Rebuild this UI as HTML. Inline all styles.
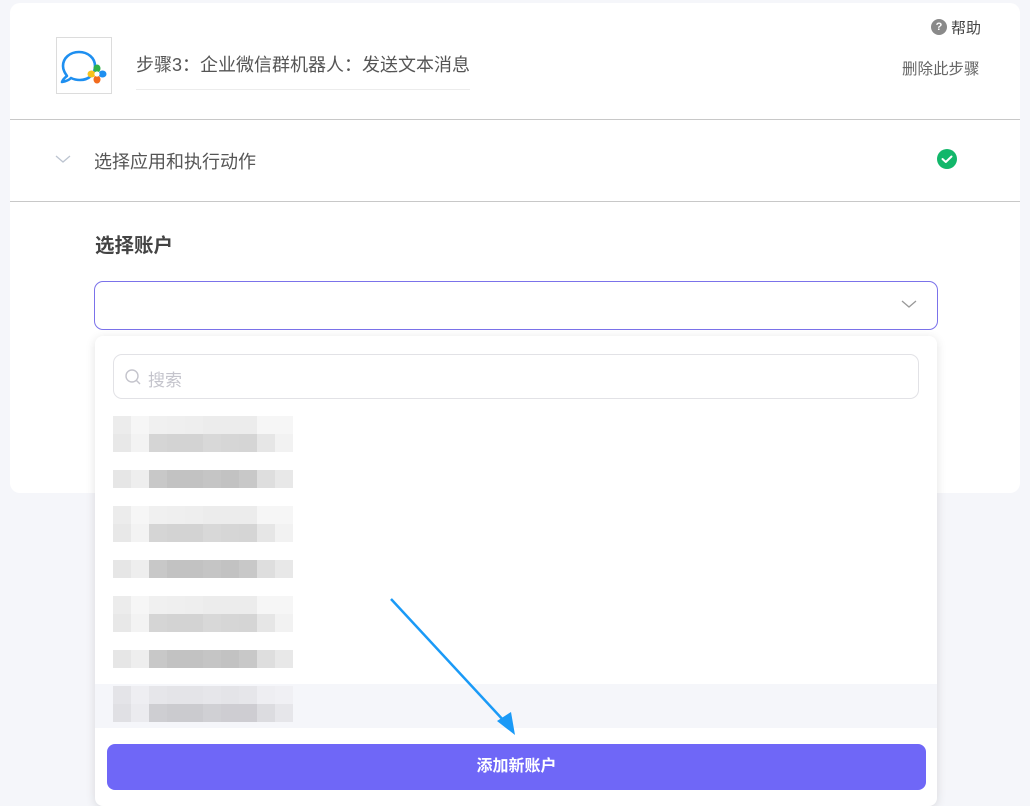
<!DOCTYPE html>
<html><head><meta charset="utf-8">
<style>
*{margin:0;padding:0;box-sizing:border-box}
body{width:1030px;height:799px;background:#f5f6fa;position:relative;overflow:hidden;font-family:"Liberation Sans","Noto Sans CJK SC",sans-serif;color:#555}
.abs{position:absolute}
.card{left:10px;top:3px;width:1010px;height:490px;background:#fff;border-radius:10px}
.row{position:absolute;left:113px;height:18px;display:flex}
.row span{width:18px;height:18px;display:block}
</style></head><body>
<div class="abs card"></div>
<div class="abs" style="left:56px;top:37px;width:56px;height:57px;border:1px solid #dcdcdc;background:#fff">
<svg width="56" height="57" viewBox="0 0 56 57">
<path d="M10 38 Q6 41 5 44 Q11 43 14 40 Q18 42 23 42 C32 42 38 36 38 28 C38 20 31 14 22 14 C13 14 6 20 6 28 C6 32 8 35 10 38 Z" fill="none" stroke="#1e8ff0" stroke-width="2.6" stroke-linejoin="round"/>
<ellipse cx="40" cy="30.5" rx="3.5" ry="4" fill="#2db24a"/>
<ellipse cx="45.5" cy="36" rx="4" ry="3.5" fill="#1e8ff0"/>
<ellipse cx="40" cy="41.5" rx="3.5" ry="4" fill="#f26b1d"/>
<ellipse cx="34.5" cy="36" rx="4" ry="3.5" fill="#f7c31c"/>
<circle cx="40" cy="36" r="2.6" fill="#fff"/>
</svg></div>
<div class="abs" style="left:136px;top:51px;font-size:18px;color:#555;white-space:nowrap">步骤3：企业微信群机器人：发送文本消息</div>
<div class="abs" style="left:136px;top:89px;width:334px;height:1px;background:#ececec"></div>
<div class="abs" style="left:931px;top:19px;width:16px;height:16px;border-radius:50%;background:#8a8a8a;color:#fff;font-size:11px;font-weight:bold;text-align:center;line-height:16px">?</div>
<div class="abs" style="left:951px;top:17px;font-size:15px;color:#444">帮助</div>
<div class="abs" style="left:902px;top:57px;font-size:15.5px;color:#666;white-space:nowrap">删除此步骤</div>
<div class="abs" style="left:10px;top:119px;width:1010px;height:1px;background:#c8c8c8"></div>
<svg class="abs" style="left:54px;top:153px" width="18" height="12"><path d="M2 3 L9 9 L16 3" fill="none" stroke="#bcc4d0" stroke-width="1.3"/></svg>
<div class="abs" style="left:94px;top:148px;font-size:18px;color:#555;white-space:nowrap">选择应用和执行动作</div>
<svg class="abs" style="left:937px;top:149px" width="20" height="20"><circle cx="10" cy="10" r="10" fill="#12b76a"/><path d="M5.5 10 L8.8 13 L14.5 7.5" fill="none" stroke="#fff" stroke-width="2" stroke-linecap="round" stroke-linejoin="round"/></svg>
<div class="abs" style="left:10px;top:201px;width:1010px;height:1px;background:#c8c8c8"></div>
<div class="abs" style="left:95px;top:229px;font-size:19.5px;font-weight:bold;color:#444;white-space:nowrap">选择账户</div>
<div class="abs" style="left:94px;top:281px;width:844px;height:49px;border:1px solid #7b72ea;border-radius:9px;background:#fff"></div>
<svg class="abs" style="left:900px;top:299px" width="18" height="12"><path d="M2 2 L9 8 L16 2" fill="none" stroke="#999" stroke-width="1.3"/></svg>
<div class="abs" style="left:95px;top:336px;width:842px;height:470px;background:#fff;border-radius:8px;box-shadow:0 2px 10px rgba(0,0,0,0.12)"></div>
<div class="abs" style="left:113px;top:354px;width:806px;height:45px;border:1px solid #e2e2e6;border-radius:9px"></div>
<svg class="abs" style="left:124px;top:368px" width="18" height="18"><circle cx="8" cy="8" r="6" fill="none" stroke="#c4c4cc" stroke-width="1.4"/><path d="M12.5 12.5 L16 16" stroke="#c4c4cc" stroke-width="1.4"/></svg>
<div class="abs" style="left:148px;top:366px;font-size:17px;color:#c4c4cc">搜索</div>
<div class="abs" style="left:95px;top:684px;width:842px;height:44px;background:#f5f6fa"></div>
<div class="abs" style="left:107px;top:744px;width:819px;height:46px;background:#6f67f7;border-radius:8px;color:#fff;font-size:16px;font-weight:bold;text-align:center;line-height:46px">添加新账户</div>
<svg class="abs" style="left:0;top:0" width="1030" height="799">
<path d="M391 599 L505 722" stroke="#1a9af7" stroke-width="2.5"/>
<path d="M515 735 L497 721 L511 712 Z" fill="#1a9af7"/>
</svg>
<div class="row" style="top:416px"><span style="background:#ececec"></span><span style="background:#f6f6f6"></span><span style="background:#f0f0f0"></span><span style="background:#efefef"></span><span style="background:#eee"></span><span style="background:#ececec"></span><span style="background:#ececec"></span><span style="background:#ececec"></span><span style="background:#f6f6f6"></span><span style="background:#f6f6f6"></span></div>
<div class="row" style="top:434px"><span style="background:#e8e8e8"></span><span style="background:#f3f3f3"></span><span style="background:#d5d5d5"></span><span style="background:#d3d3d3"></span><span style="background:#d3d3d3"></span><span style="background:#d8d8d8"></span><span style="background:#d6d6d6"></span><span style="background:#d5d5d5"></span><span style="background:#e6e6e6"></span><span style="background:#f2f2f2"></span></div>
<div class="row" style="top:470px"><span style="background:#e6e6e6"></span><span style="background:#eee"></span><span style="background:#c8c8c8"></span><span style="background:#c2c2c2"></span><span style="background:#c2c2c2"></span><span style="background:#c5c5c5"></span><span style="background:#c2c2c2"></span><span style="background:#c8c8c8"></span><span style="background:#dedede"></span><span style="background:#e8e8e8"></span></div>
<div class="row" style="top:506px"><span style="background:#ececec"></span><span style="background:#f6f6f6"></span><span style="background:#f0f0f0"></span><span style="background:#efefef"></span><span style="background:#eee"></span><span style="background:#ececec"></span><span style="background:#ececec"></span><span style="background:#ececec"></span><span style="background:#f6f6f6"></span><span style="background:#f6f6f6"></span></div>
<div class="row" style="top:524px"><span style="background:#e8e8e8"></span><span style="background:#f3f3f3"></span><span style="background:#d5d5d5"></span><span style="background:#d3d3d3"></span><span style="background:#d3d3d3"></span><span style="background:#d8d8d8"></span><span style="background:#d6d6d6"></span><span style="background:#d5d5d5"></span><span style="background:#e6e6e6"></span><span style="background:#f2f2f2"></span></div>
<div class="row" style="top:560px"><span style="background:#e6e6e6"></span><span style="background:#eee"></span><span style="background:#c8c8c8"></span><span style="background:#c2c2c2"></span><span style="background:#c2c2c2"></span><span style="background:#c5c5c5"></span><span style="background:#c2c2c2"></span><span style="background:#c8c8c8"></span><span style="background:#dedede"></span><span style="background:#e8e8e8"></span></div>
<div class="row" style="top:596px"><span style="background:#ececec"></span><span style="background:#f6f6f6"></span><span style="background:#f0f0f0"></span><span style="background:#efefef"></span><span style="background:#eee"></span><span style="background:#ececec"></span><span style="background:#ececec"></span><span style="background:#ececec"></span><span style="background:#f6f6f6"></span><span style="background:#f6f6f6"></span></div>
<div class="row" style="top:614px"><span style="background:#e8e8e8"></span><span style="background:#f3f3f3"></span><span style="background:#d5d5d5"></span><span style="background:#d3d3d3"></span><span style="background:#d3d3d3"></span><span style="background:#d8d8d8"></span><span style="background:#d6d6d6"></span><span style="background:#d5d5d5"></span><span style="background:#e6e6e6"></span><span style="background:#f2f2f2"></span></div>
<div class="row" style="top:650px"><span style="background:#e6e6e6"></span><span style="background:#eee"></span><span style="background:#c8c8c8"></span><span style="background:#c2c2c2"></span><span style="background:#c2c2c2"></span><span style="background:#c5c5c5"></span><span style="background:#c2c2c2"></span><span style="background:#c8c8c8"></span><span style="background:#dedede"></span><span style="background:#e8e8e8"></span></div>
<div class="row" style="top:686px"><span style="background:#e4e4e8"></span><span style="background:#eeeef2"></span><span style="background:#e6e6ea"></span><span style="background:#e4e4e8"></span><span style="background:#e4e4e8"></span><span style="background:#e6e6ea"></span><span style="background:#e4e4e8"></span><span style="background:#e6e6ea"></span><span style="background:#eeeef2"></span><span style="background:#f0f0f4"></span></div>
<div class="row" style="top:704px"><span style="background:#e0e0e4"></span><span style="background:#ebebef"></span><span style="background:#ceced2"></span><span style="background:#cbcbcf"></span><span style="background:#cbcbcf"></span><span style="background:#d0d0d4"></span><span style="background:#cecdd2"></span><span style="background:#cecdd2"></span><span style="background:#dcdce0"></span><span style="background:#e6e6ea"></span></div>
</body></html>
